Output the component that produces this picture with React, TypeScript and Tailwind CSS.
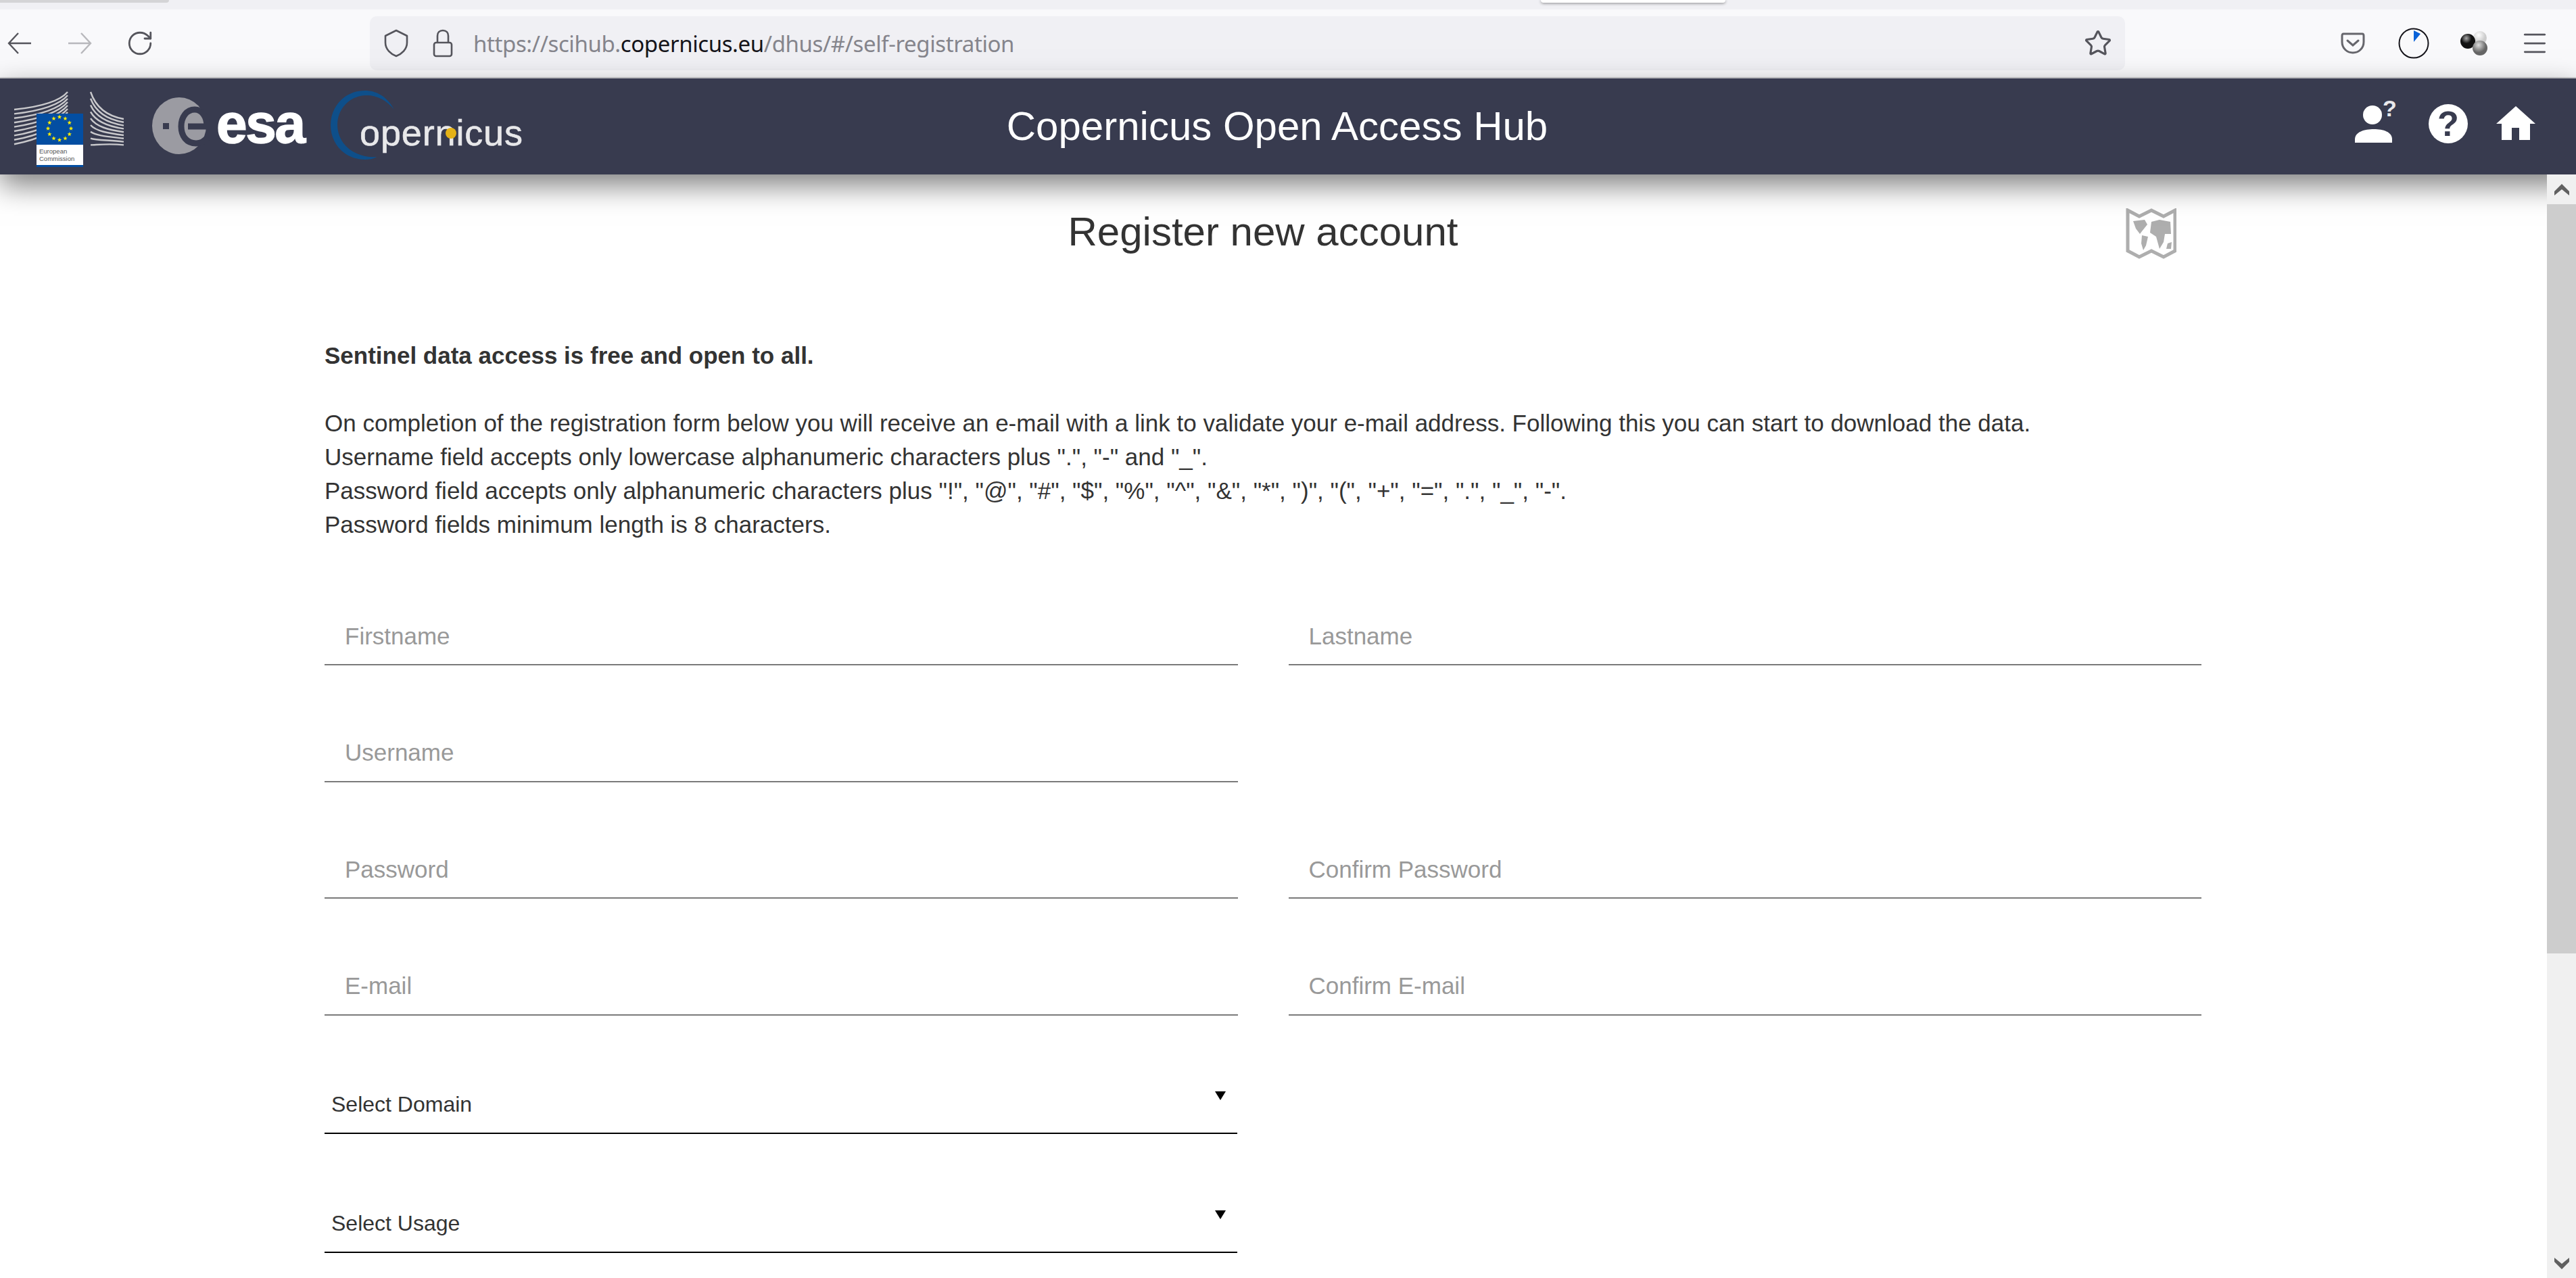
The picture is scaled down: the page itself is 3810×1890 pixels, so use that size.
import { Star, RotateCw, Menu } from "lucide-react"

const sans = "font-['Liberation_Sans',Arial,sans-serif]"

const Logos = () => {
  const stars = Array.from({ length: 12 }, (_, i) => {
    const a = (i * Math.PI) / 6
    const cx = 88 + 17 * Math.sin(a)
    const cy = 190 - 17 * Math.cos(a)
    // five point star
    const points = Array.from({ length: 10 }, (_, k) => {
      const r = k % 2 === 0 ? 3.4 : 1.4
      const t = (k * Math.PI) / 5
      return `${cx + r * Math.sin(t)},${cy - r * Math.cos(t)}`
    }).join(" ")
    return points
  })
  return (
    <svg viewBox="0 116 800 142" className="w-[800px] h-[142px]">
      {/* EC building */}
      <g fill="none" stroke="#c9c9cc" strokeWidth="2.4">
        {[0, 1, 2, 3, 4, 5, 6, 7, 8].map((i) => (
          <path key={i} d={`M21 ${162 + i * 6.4} C60 ${158 + i * 6} 88 ${150 + i * 5} 100 ${136 + i * 5}`} />
        ))}
        {[0, 1, 2, 3, 4, 5, 6, 7, 8].map((i) => (
          <path key={i} d={`M134 ${136 + i * 9.8} C142 ${160 + i * 6.8} 160 ${172 + i * 5} 183 ${176 + i * 4.8}`} />
        ))}
      </g>
      <rect x="54" y="168" width="69" height="46" fill="#034ea2" />
      <rect x="54" y="214" width="69" height="33" fill="#fff" />
      <rect x="54" y="244" width="69" height="3" fill="#034ea2" />
      {stars.map((points, i) => (
        <polygon key={i} points={points} fill="#ffed00" />
      ))}
      <text x="58" y="227" fontSize="9.5" fill="#555" fontFamily="Liberation Sans">European</text>
      <text x="58" y="238" fontSize="9.5" fill="#555" fontFamily="Liberation Sans">Commission</text>
      {/* esa */}
      <ellipse cx="265" cy="186" rx="40" ry="42" fill="#9b9ba2" />
      <path d="M278 187 H306 C306 172 298 162 288 162 C276 162 268 173 268 187 C268 201 276 212 290 212 C298 212 303 208 307 203" fill="none" stroke="#383b4f" strokeWidth="9" />
      <rect x="241" y="182" width="9" height="9" fill="#383b4f" />
      <text x="320" y="211" fontSize="82" fontWeight="700" fill="#fff" fontFamily="Liberation Sans" stroke="#fff" strokeWidth="1.5" textLength="132">esa</text>
      {/* copernicus */}
      <path d="M583 162 C572 142 556 134 540 134 C510 134 489 157 489 185 C489 213 510 236 540 236 C546 236 552 235 557 232 C530 234 500 218 499 185 C499 160 518 142 540 141 C556 140 572 148 583 162Z" fill="#0e4f8a" />
      <text x="532" y="215" fontSize="54" fill="#e8e8ea" stroke="#e8e8ea" strokeWidth="0.6" fontFamily="Liberation Sans" textLength="241">opernicus</text>
      <circle cx="667" cy="197" r="8" fill="#e5b217" />
    </svg>
  )
}

const HeaderIcons = () => (
  <div className="flex items-center justify-end mr-[28px]">
    <svg viewBox="0 -14 64 84" className="mb-[14px] w-[64px] h-[84px]">
      <circle cx="26" cy="18" r="14" fill="#fff" />
      <path d="M0 59 V54 C0 43 14 39 28 39 C42 39 55 43 55 54 V59Z" fill="#fff" />
      <text x="41" y="20" fontSize="34" fontWeight="700" fill="#e8e8ec" fontFamily="Liberation Sans">?</text>
    </svg>
    <div className={`ml-[45px] mb-[8px] w-[58px] h-[58px] rounded-full bg-white flex items-center justify-center text-[52px] leading-none font-bold text-[#383b4f] ${sans}`}>?</div>
    <svg viewBox="0 0 58 50" className="ml-[42px] mb-[10px] w-[58px] h-[50px]">
      <path d="M29 0 L58 26 L50 26 L50 50 L34 50 L34 32 L23 32 L23 50 L8 50 L8 26 L0 26Z" fill="#fff" />
    </svg>
  </div>
)

const Toolbar = () => (
  <div className="h-[102px] bg-[#f9f9fb] border-b-2 border-[#cfcfd2] flex items-center text-[#55555c]">
    <svg viewBox="0 0 36 32" className="ml-[11px] w-[36px] h-[32px]" fill="none" stroke="#55555c" strokeWidth="2.4">
      <path d="M35 16 H2 M16 1 L2 16 L16 31" />
    </svg>
    <svg viewBox="0 0 36 32" className="ml-[53px] w-[36px] h-[32px]" fill="none" stroke="#b8b8bc" strokeWidth="2.4">
      <path d="M1 16 H34 M20 1 L34 16 L20 31" />
    </svg>
    <RotateCw size={42} strokeWidth={1.6} className="ml-[50px]" />
    <div className="ml-[319px] w-[2596px] h-[80px] rounded-[10px] bg-[#f0f0f4] flex items-center">
      <svg viewBox="0 0 36 42" className="ml-[21px] w-[36px] h-[42px]" fill="none" stroke="#55555c" strokeWidth="2.6">
        <path d="M18 2 L34 10 V20 C34 30 26 37 18 40 C10 37 2 30 2 20 V10Z" strokeLinejoin="round" />
      </svg>
      <svg viewBox="0 0 30 42" className="ml-[36px] w-[30px] h-[42px]" fill="none" stroke="#55555c" strokeWidth="2.6">
        <rect x="2" y="20" width="26" height="20" rx="3" />
        <path d="M7 20 V10 C7 5 10 2 15 2 C20 2 23 5 23 10 V20" />
      </svg>
      <div className="ml-[30px] mt-[2px] text-[33px] tracking-[-0.4px] text-[#85858c] font-['Noto_Sans',sans-serif]">
        https://scihub.<span className="text-[#15141a]">copernicus.eu</span>/dhus/#/self-registration
      </div>
      <Star size={42} strokeWidth={1.8} className="ml-auto mr-[19px]" />
    </div>
    <svg viewBox="0 0 36 32" className="ml-[319px] w-[36px] h-[32px]" fill="none" stroke="#66666c" strokeWidth="3">
      <path d="M4 2 H32 Q34 2 34 5 V14 C34 24 26 30 18 30 C10 30 2 24 2 14 V5 Q2 2 4 2Z" />
      <path d="M10 12 L18 19 L26 12" strokeLinecap="round" />
    </svg>
    <svg viewBox="0 0 46 46" className="ml-[49px] w-[46px] h-[46px]">
      <circle cx="23" cy="23" r="21.5" fill="none" stroke="#15141a" strokeWidth="2" />
      <path d="M23 4 L33 9 L23 21Z" fill="#0a62d8" />
    </svg>
    <svg viewBox="0 0 42 40" className="ml-[45px] w-[42px] h-[40px]">
      <defs>
        <radialGradient id="ball1" cx="40%" cy="30%"><stop offset="0%" stopColor="#aaa" /><stop offset="70%" stopColor="#111" /></radialGradient>
        <radialGradient id="ball2" cx="40%" cy="30%"><stop offset="0%" stopColor="#ddd" /><stop offset="100%" stopColor="#666" /></radialGradient>
        <radialGradient id="ball3" cx="40%" cy="30%"><stop offset="0%" stopColor="#fff" /><stop offset="100%" stopColor="#ccc" /></radialGradient>
      </defs>
      <circle cx="30" cy="12" r="10" fill="url(#ball3)" />
      <circle cx="12" cy="17" r="11" fill="url(#ball1)" />
      <circle cx="30" cy="27" r="11" fill="url(#ball2)" />
    </svg>
    <Menu size={44} strokeWidth={1.5} className="ml-[47px]" />
  </div>
)

const Field = ({ label }: { label: string }) => (
  <input
    placeholder={label}
    className="w-full h-[83px] px-[30px] pb-[2px] border-b-2 border-[#7a7a7a] bg-transparent outline-none text-[35px] placeholder:text-[#999]"
  />
)

const Dropdown = ({ label }: { label: string }) => (
  <div className="h-[84px] border-b-2 border-black flex justify-between pl-[10px] pr-[17px] text-[32px] text-[#333] leading-[50px]">
    <span className="pt-[15px]">{label}</span>
    <span className="mt-[21px] w-0 h-0 border-x-[8px] border-x-transparent border-t-[13px] border-t-black" />
  </div>
)

const ScrollChevron = ({ down }: { down?: boolean }) => (
  <div className="h-[44px] bg-[#f0f0f0] flex items-center justify-center">
    <svg viewBox="0 0 22 17" className={`w-[22px] h-[17px] ${down ? "rotate-180" : ""}`}>
      <path d="M11 0 L22 11 V17 L11 8 L0 17 V11Z" fill="#606060" />
    </svg>
  </div>
)

export default function App() {
  return (
    <div className={`w-[3810px] h-[1890px] overflow-hidden flex flex-col bg-white text-[#333] ${sans}`}>
      {/* tab strip */}
      <div className="h-[14px] bg-[#f0f0f4] flex items-start">
        <div className="w-[250px] h-[4px] bg-[#d4d4d6] rounded-br-md" />
        <div className="ml-[2029px] w-[273px] h-[4px] bg-white rounded-b-md shadow-[0_1px_4px_rgba(0,0,0,0.45)]" />
      </div>
      <Toolbar />

      {/* header */}
      <div className="relative z-10 h-[142px] shrink-0 bg-[#383b4f] text-white grid grid-cols-[1fr_auto_1fr] items-center pr-[32px] shadow-[0_16px_40px_rgba(0,0,0,0.5)]">
        <Logos />
        <h1 className="text-[60px] leading-none font-normal">Copernicus Open Access Hub</h1>
        <HeaderIcons />
      </div>

      <div className="flex-1 flex min-h-0">
        <main className="flex-1 pl-[480px] pr-[511px]">
          <div className="grid grid-cols-[1fr_auto_1fr] items-start pt-[50px]">
            <div />
            <h2 className="text-[60px] leading-[70px] font-normal">Register new account</h2>
            <svg viewBox="0 0 75 75" className="justify-self-end mr-[37px] w-[75px] h-[75px]">
              <path d="M3 3 L20 12 L38 3 L56 12 L73 3 V63 L56 72 L38 63 L20 72 L3 63Z" fill="none" stroke="#aeaeae" strokeWidth="5" />
              <path d="M11 19 L28 17 L32 24 L24 34 L21 38 L15 30Z M24 40 L33 42 L30 55 L26 62 L23 52Z M38 20 L50 17 L66 20 L67 38 L58 38 L56 50 L50 60 L45 42 L36 36Z M62 52 L68 50 L67 60 L60 60Z" fill="#aeaeae" />
            </svg>
          </div>

          <div className="mt-[118px] text-[35px] leading-[50px]">
            <p className="font-bold">Sentinel data access is free and open to all.</p>
            <p className="mt-[50px]">On completion of the registration form below you will receive an e-mail with a link to validate your e-mail address. Following this you can start to download the data.</p>
            <p>Username field accepts only lowercase alphanumeric characters plus ".", "-" and "_".</p>
            <p>Password field accepts only alphanumeric characters plus "!", "@", "#", "$", "%", "^", "&amp;", "*", ")", "(", "+", "=", ".", "_", "-".</p>
            <p>Password fields minimum length is 8 characters.</p>
          </div>

          <div className="mt-[100px] grid grid-cols-2 gap-x-[75px] gap-y-[89.5px]">
            <Field label="Firstname" />
            <Field label="Lastname" />
            <Field label="Username" />
            <div />
            <Field label="Password" />
            <Field label="Confirm Password" />
            <Field label="E-mail" />
            <Field label="Confirm E-mail" />
          </div>
          <div className="w-[1350px] mt-[91px] flex flex-col gap-[92px]">
            <Dropdown label="Select Domain" />
            <Dropdown label="Select Usage" />
          </div>
        </main>

        {/* scrollbar */}
        <div className="relative z-20 w-[43px] flex flex-col bg-[#f0f0f0]">
          <ScrollChevron />
          <div className="h-[1108px] bg-[#cdcdcd]" />
          <div className="flex-1" />
          <ScrollChevron down />
        </div>
      </div>
    </div>
  )
}
